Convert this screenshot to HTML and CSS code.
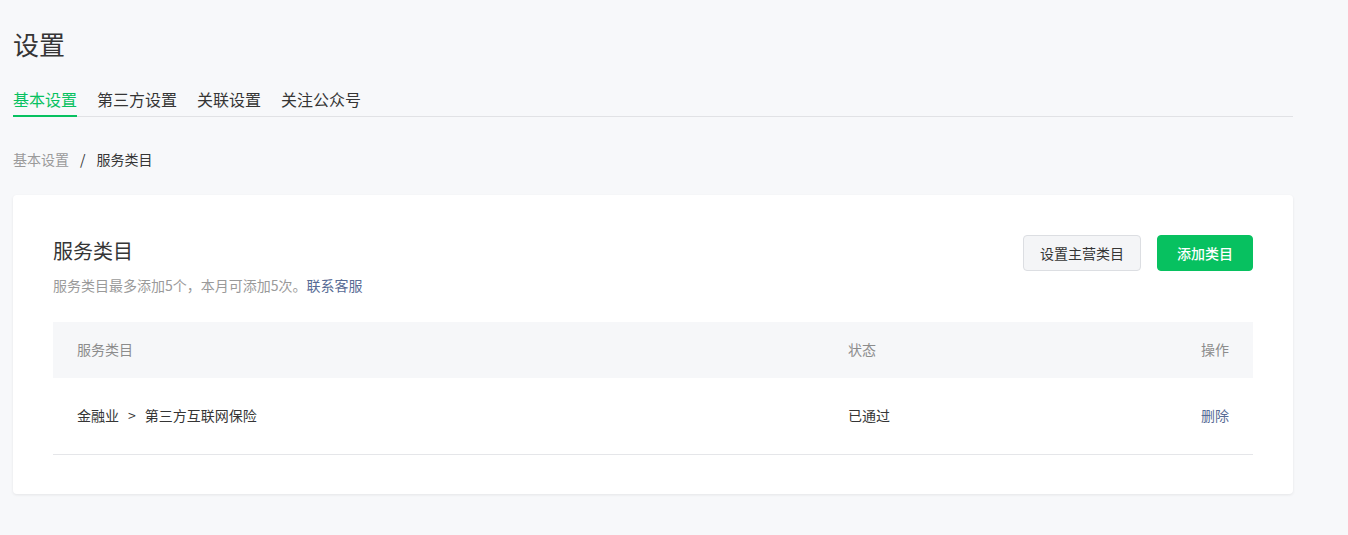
FILE: index.html
```html
<!DOCTYPE html>
<html lang="zh-CN">
<head>
<meta charset="utf-8">
<title>设置</title>
<link rel="stylesheet" href="styles.css">
</head>
<body>
<div class="page">
  <h1 class="page-title">设置</h1>
  <nav class="tabs">
    <a class="tab active">基本设置</a>
    <a class="tab">第三方设置</a>
    <a class="tab">关联设置</a>
    <a class="tab">关注公众号</a>
  </nav>
  <div class="breadcrumb">
    <span class="crumb-link">基本设置</span>
    <span class="crumb-sep">/</span>
    <span class="crumb-current">服务类目</span>
  </div>
  <section class="card">
    <div class="card-head">
      <div class="card-info">
        <h2 class="card-title">服务类目</h2>
        <p class="card-desc">服务类目最多添加5个，本月可添加5次。<a class="link">联系客服</a></p>
      </div>
      <div class="card-actions">
        <button class="btn btn-default">设置主营类目</button>
        <button class="btn btn-primary">添加类目</button>
      </div>
    </div>
    <div class="table">
      <div class="tr thead">
        <div class="td">服务类目</div>
        <div class="td">状态</div>
        <div class="td td-right">操作</div>
      </div>
      <div class="tr tbody">
        <div class="td">金融业<span class="arrow">&gt;</span>第三方互联网保险</div>
        <div class="td">已通过</div>
        <div class="td td-right"><a class="link">删除</a></div>
      </div>
    </div>
  </section>
</div>
</body>
</html>
```
FILE: styles.css
```css
* { box-sizing: border-box; }
html, body {
  margin: 0;
  padding: 0;
  background: #f7f8fa;
}
body {
  font-family: "Noto Sans CJK SC", "Noto Sans", sans-serif;
  color: #353535;
  height: 535px;
  overflow: hidden;
}
.page {
  width: 1280px;
  margin-left: 13px;
  padding-top: 31px;
}
.page-title {
  margin: 0;
  font-size: 26px;
  line-height: 26px;
  font-weight: 400;
  color: #353535;
}
.tabs {
  display: flex;
  gap: 20px;
  margin-top: 30px;
  border-bottom: 1px solid #e1e2e5;
  height: 30px;
}
.tab {
  font-size: 16px;
  line-height: 24px;
  padding-bottom: 4px;
  height: 30px;
  color: #353535;
  border-bottom: 2px solid transparent;
}
.tab.active {
  color: #07c160;
  border-bottom-color: #07c160;
}
.breadcrumb {
  margin-top: 32px;
  font-size: 14px;
  line-height: 20px;
  display: flex;
  align-items: center;
}
.crumb-link { color: #9a9a9a; }
.crumb-sep { color: #353535; margin: 0 11px; }
.crumb-current { color: #353535; }
.card {
  margin-top: 26px;
  background: #fff;
  border-radius: 4px;
  box-shadow: 0 1px 3px rgba(0, 0, 0, 0.08);
  padding: 40px 40px 39px;
}
.card-head {
  display: flex;
  justify-content: space-between;
  align-items: flex-start;
}
.card-title {
  margin: 0;
  font-size: 20px;
  line-height: 32px;
  font-weight: 400;
  color: #353535;
}
.card-desc {
  margin: 8px 0 0;
  font-size: 14px;
  line-height: 20px;
  color: #9a9a9a;
}
.link {
  color: #576b95;
  cursor: pointer;
}
.card-actions {
  display: flex;
  gap: 16px;
}
.btn {
  font-family: inherit;
  font-size: 14px;
  height: 36px;
  line-height: 34px;
  border-radius: 4px;
  cursor: pointer;
  padding: 0;
}
.btn-default {
  width: 118px;
  background: #f4f5f7;
  border: 1px solid #dcdee2;
  color: #353535;
}
.btn-primary {
  width: 96px;
  background: #07c160;
  border: 1px solid #07c160;
  color: #fff;
  font-weight: 500;
}
.table {
  margin-top: 27px;
}
.tr {
  display: grid;
  grid-template-columns: 771px 1fr 1fr;
  align-items: center;
  font-size: 14px;
}
.thead {
  height: 56px;
  background: #f6f7f9;
  color: #8c8c8c;
}
.tbody {
  height: 77px;
  border-bottom: 1px solid #e5e6e9;
  color: #353535;
}
.td {
  padding: 0 24px 2px;
  line-height: 20px;
}
.td-right { text-align: right; }
.arrow {
  margin: 0 9px;
}
```
